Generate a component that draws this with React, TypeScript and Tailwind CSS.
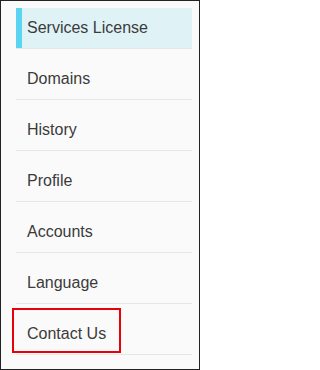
const ITEMS = [
  "Services License",
  "Domains",
  "History",
  "Profile",
  "Accounts",
  "Language",
  "Contact Us",
];

export default function App() {
  return (
    <div
      className="relative h-[370px] w-[200px] border border-[#222] bg-[#fafafa] pt-[7px] pl-[15px] pr-[7px]"
      style={{ fontFamily: '"Liberation Sans", Arial, sans-serif' }}
    >
      <ul>
        {ITEMS.map((label, idx) => {
          const active = idx === 0;
          return (
            <li
              key={label}
              className={`border-b border-[#e6e6e6] ${idx > 0 ? "pt-[10px]" : ""}`}
            >
              <a
                className={`flex h-10 items-center text-[16px] text-[#3b3b3b] ${
                  active
                    ? "border-l-[6px] border-[#5bd4f1] bg-[#dff3f7] pl-[5px]"
                    : "pl-[11px]"
                }`}
              >
                {label}
              </a>
            </li>
          );
        })}
      </ul>
      <div className="pointer-events-none absolute left-[11px] top-[307px] h-[45px] w-[109px] border-2 border-[#e8000b]" />
    </div>
  );
}
